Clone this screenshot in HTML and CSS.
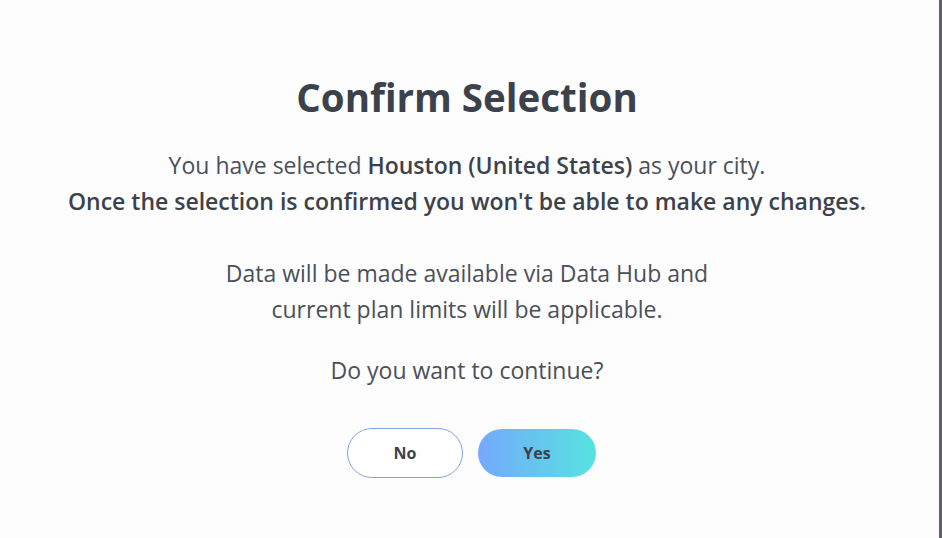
FILE: index.html
```html
<!DOCTYPE html>
<html lang="en">
<head>
<meta charset="utf-8">
<title>Confirm Selection</title>
<link rel="stylesheet" href="styles.css">
</head>
<body>
<div class="page">
  <main class="dialog">
    <h1 class="title">Confirm Selection</h1>
    <p class="lead">You have selected <strong>Houston (United States)</strong> as your city.<br><strong>Once the selection is confirmed you won't be able to make any changes.</strong></p>
    <p class="info">Data will be made available via Data Hub and<br>current plan limits will be applicable.</p>
    <p class="question">Do you want to continue?</p>
    <div class="actions">
      <button class="btn btn-no" type="button">No</button>
      <button class="btn btn-yes" type="button">Yes</button>
    </div>
  </main>
  <div class="edge"></div>
</div>
</body>
</html>
```

FILE: styles.css
```css
html, body {
  margin: 0;
  padding: 0;
  height: 100%;
}
body {
  background: #fdfdfd;
  font-family: "Open Sans", "Noto Sans", sans-serif;
  color: #3c424b;
}
.page {
  display: flex;
  height: 538px;
}
.dialog {
  flex: 1;
  display: flex;
  flex-direction: column;
  align-items: center;
  text-align: center;
  padding-top: 70px;
  padding-right: 5px;
}
.edge {
  width: 3px;
  background: #5c6069;
}
.title {
  margin: 0;
  font-size: 38.5px;
  font-weight: 700;
  line-height: 54px;
  color: #3c424b;
}
.lead, .info, .question {
  margin: 0;
  font-size: 23px;
  line-height: 36px;
  color: #4a5059;
}
.lead strong {
  font-weight: 600;
  color: #3c424b;
}
.lead { margin-top: 23px; }
.info { margin-top: 36px; }
.question { margin-top: 25px; }
.actions {
  display: flex;
  gap: 15px;
  align-items: center;
  margin-top: 40px;
  margin-left: 9px;
}
.btn {
  font-family: inherit;
  font-size: 16px;
  font-weight: 700;
  color: #3c424b;
  border-radius: 25px;
  cursor: pointer;
}
.btn-no {
  width: 116px;
  height: 50px;
  background: #ffffff;
  border: 1px solid #7fa3e6;
}
.btn-yes {
  width: 118px;
  height: 48px;
  border: none;
  background: linear-gradient(90deg, #74a9fc 0%, #56e3e0 100%);
}
```
